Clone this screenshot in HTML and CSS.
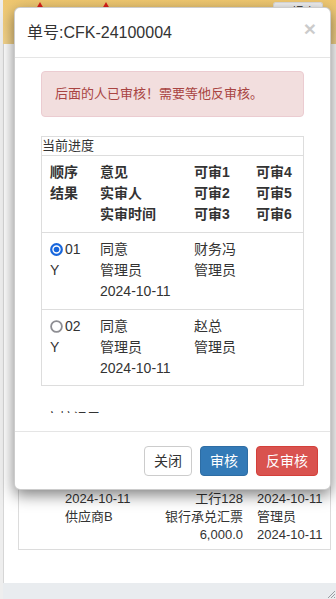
FILE: index.html
```html
<!DOCTYPE html>
<html lang="zh-CN">
<head>
<meta charset="utf-8">
<title>审核</title>
<link rel="stylesheet" href="styles.css">
</head>
<body>
<div class="page">
  <div class="topbar">
    <span class="tri tri-a"></span>
    <span class="tri tri-b"></span>
    <span class="top-btn">已提交</span>
  </div>
  <div class="content">
    <div class="bg-table">
      <div class="bg-row"><span></span><span>单据日期</span><span class="r">账户</span><span>审核日期</span></div>
      <div class="bg-row"><span></span><span>2024-10-11</span><span class="r">工行128</span><span>2024-10-11</span></div>
      <div class="bg-row"><span></span><span>供应商B</span><span class="r">银行承兑汇票</span><span>管理员</span></div>
      <div class="bg-row"><span></span><span></span><span class="r">6,000.0</span><span>2024-10-11</span></div>
    </div>
  </div>
  <div class="statusbar">
    <svg class="grip" width="10" height="10" viewBox="0 0 10 10"><path d="M9 2 L2 9 M9 5 L5 9 M9 8 L8 9" stroke="#9a9ea3" stroke-width="1" fill="none"/></svg>
  </div>
</div>

<div class="modal">
  <div class="modal-header">
    <h4 class="modal-title">单号:CFK-24100004</h4>
    <span class="close">×</span>
  </div>
  <div class="modal-body">
    <div class="scroll">
      <div class="alert">后面的人已审核！需要等他反审核。</div>
      <div class="progress">
        <div class="progress-title">当前进度</div>
        <div class="grid head">
          <span>顺序</span><span>结果</span><span></span>
          <span>意见</span><span>实审人</span><span>实审时间</span>
          <span>可审1</span><span>可审2</span><span>可审3</span>
          <span>可审4</span><span>可审5</span><span>可审6</span>
        </div>
        <div class="grid">
          <span class="seq"><svg class="radio" width="13" height="13" viewBox="0 0 13 13"><circle cx="6.5" cy="6.5" r="5.3" fill="#fff" stroke="#1766dc" stroke-width="2.2"/><circle cx="6.5" cy="6.5" r="2.8" fill="#1766dc"/></svg>01</span><span>Y</span><span></span>
          <span>同意</span><span>管理员</span><span>2024-10-11</span>
          <span>财务冯</span><span>管理员</span><span></span>
          <span></span><span></span><span></span>
        </div>
        <div class="grid">
          <span class="seq"><svg class="radio" width="13" height="13" viewBox="0 0 13 13"><circle cx="6.5" cy="6.5" r="5.4" fill="#fff" stroke="#8e8e93" stroke-width="1.8"/></svg>02</span><span>Y</span><span></span>
          <span>同意</span><span>管理员</span><span>2024-10-11</span>
          <span>赵总</span><span>管理员</span><span></span>
          <span></span><span></span><span></span>
        </div>
      </div>
      <div class="more">审核记录</div>
    </div>
  </div>
  <div class="modal-footer">
    <button class="btn btn-default">关闭</button>
    <button class="btn btn-primary">审核</button>
    <button class="btn btn-danger">反审核</button>
  </div>
</div>
</body>
</html>
```

FILE: styles.css
```css
html, body {
  margin: 0;
  padding: 0;
}
body {
  width: 336px;
  height: 599px;
  overflow: hidden;
  position: relative;
  font-family: "Liberation Sans", Arial, "Noto Sans CJK SC", sans-serif;
  color: #333;
  background: #fff;
}
.page {
  display: flex;
  flex-direction: column;
  height: 599px;
  border-left: 3px solid #eeeeee;
  box-shadow: inset 1px 0 0 #d6d6d6;
}
.topbar {
  height: 44px;
  flex: none;
  display: flex;
  align-items: flex-start;
  background: linear-gradient(#f0c870, #f4d48c);
}
.tri {
  width: 0;
  height: 0;
  margin-top: 2px;
  border-left: 4px solid transparent;
  border-right: 4px solid transparent;
  border-bottom: 7px solid #e0201a;
}
.tri-a { margin-left: 33px; }
.tri-b { margin-left: 58px; }
.top-btn {
  margin-left: auto;
  margin-right: 13px;
  margin-top: 2px;
  height: 10px;
  overflow: hidden;
  padding: 3px 6px 0;
  font-size: 12px;
  line-height: 14px;
  background: #f2f2f2;
  border: 1px solid #ddd;
  border-bottom: none;
  border-radius: 3px 3px 0 0;
  color: #222;
}
.content {
  flex: 1;
  display: flex;
  flex-direction: column;
  justify-content: flex-end;
  padding: 0 5px 33px 15px;
}
.bg-table {
  border: 1px solid #dcdcdc;
  border-top: none;
  padding-bottom: 5px;
  font-size: 13px;
}
.bg-row {
  display: grid;
  grid-template-columns: 46px 95px 83px 70px;
  height: 18px;
  line-height: 18px;
  white-space: nowrap;
}
.bg-row span:last-child {
  margin-left: 14px;
}
.bg-row .r {
  text-align: right;
}
.statusbar {
  height: 16px;
  flex: none;
  background: #e9ecef;
  display: flex;
  justify-content: flex-end;
  align-items: flex-end;
}
.grip {
  display: block;
}

/* modal */
.modal {
  position: absolute;
  left: 14px;
  top: 7px;
  width: 315px;
  background: #fff;
  border: 1px solid rgba(0,0,0,.2);
  border-radius: 6px;
  box-shadow: 0 5px 15px rgba(0,0,0,.5);
}
.modal-header {
  display: flex;
  align-items: flex-start;
  justify-content: space-between;
  padding: 13px 14px 13px 12px;
  border-bottom: 1px solid #e5e5e5;
}
.modal-title {
  margin: 0;
  font-size: 16px;
  font-weight: normal;
  line-height: 23px;
  color: #333;
}
.close {
  font-size: 21px;
  font-weight: bold;
  line-height: 21px;
  margin-top: -3px;
  color: #000;
  opacity: .2;
}
.modal-body {
  padding: 13px 26px 18px 26px;
}
.scroll {
  height: 342px;
  overflow: hidden;
}
.alert {
  padding: 13px 13px;
  font-size: 13px;
  line-height: 18px;
  color: #a94442;
  background: #f2dede;
  border: 1px solid #ebccd1;
  border-radius: 4px;
}
.progress {
  margin-top: 19px;
  border: 1px solid #dddddd;
}
.progress-title {
  font-size: 13px;
  line-height: 18px;
  border-bottom: 1px solid #dddddd;
}
.grid {
  display: grid;
  grid-auto-flow: column;
  grid-template-rows: repeat(3, 21px);
  grid-template-columns: 50px 94px 62px 1fr;
  padding: 6px 0 7px 8px;
  font-size: 14px;
  line-height: 21px;
  white-space: nowrap;
  border-bottom: 1px solid #dddddd;
}
.grid:last-child {
  border-bottom: none;
  padding-bottom: 6px;
}
.grid.head {
  font-weight: bold;
}
.seq {
  display: flex;
  align-items: center;
  gap: 2px;
}
.radio {
  display: block;
  flex: none;
}
.more {
  margin-top: 22px;
  padding-left: 4px;
  font-size: 14px;
  line-height: 20px;
}
.modal-footer {
  display: flex;
  justify-content: flex-end;
  gap: 8px;
  padding: 14px 12px 13px;
  border-top: 1px solid #e5e5e5;
}
.btn {
  font-family: inherit;
  font-size: 14px;
  line-height: 18px;
  padding: 5px 9px;
  border: 1px solid transparent;
  border-radius: 4px;
  margin: 0;
}
.btn-default {
  background: #fff;
  border-color: #ccc;
  color: #333;
}
.btn-primary {
  background: #337ab7;
  border-color: #2e6da4;
  color: #fff;
}
.btn-danger {
  background: #d9534f;
  border-color: #d43f3a;
  color: #fff;
}
```
